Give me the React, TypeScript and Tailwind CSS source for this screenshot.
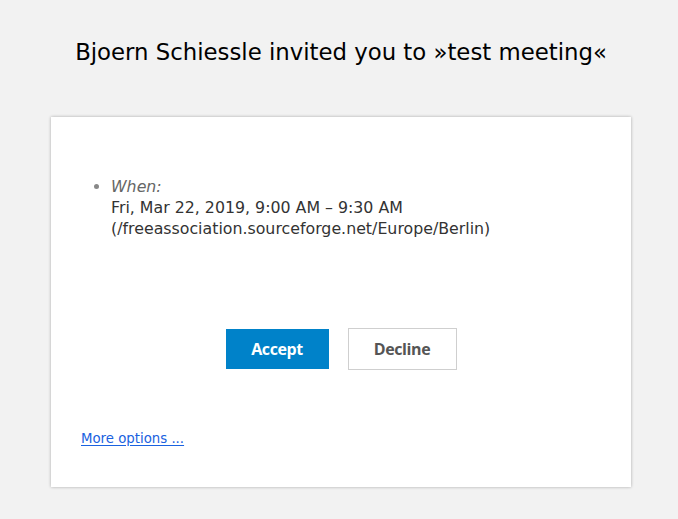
import React from "react";

export default function App() {
  return (
    <div
      className="min-h-screen w-full bg-[#f2f2f2] pl-[4px] flex flex-col items-center"
      style={{ fontFamily: '"DejaVu Sans", "Open Sans", sans-serif' }}
    >
      <h1 className="pt-[36px] text-[22.8px] leading-[32px] font-normal text-black">
        Bjoern Schiessle invited you to »test meeting«
      </h1>
      <div className="mt-[49px] w-[580px] h-[370px] bg-white shadow-[0_0_3px_rgba(0,0,0,0.3)] flex flex-col px-[30px] pt-[59px]">
        <ul className="list-disc pl-[30px] text-[15.8px] leading-[21px] text-[#333] marker:text-[#888]">
          <li>
            <em className="text-[#666]">When:</em>
            <br />
            Fri, Mar 22, 2019, 9:00 AM – 9:30 AM
            <br />
            (/freeassociation.sourceforge.net/Europe/Berlin)
          </li>
        </ul>
        <div
          className="mt-[89px] flex items-center justify-center gap-[19px]"
          style={{ fontFamily: '"Open Sans", "DejaVu Sans", sans-serif' }}
        >
          <button className="w-[103px] h-[40px] bg-[#0082c9] text-white text-[16px] font-bold tracking-[-0.4px]">
            Accept
          </button>
          <button className="w-[109px] h-[42px] bg-white border border-[#cfcfcf] text-[#555] text-[16px] font-bold tracking-[-0.4px]">
            Decline
          </button>
        </div>
        <div className="mt-[60px] text-[13.3px] leading-[18px]">
          <a href="#" className="text-[#1a62e0] underline underline-offset-[2px]">
            More options ...
          </a>
        </div>
      </div>
    </div>
  );
}
